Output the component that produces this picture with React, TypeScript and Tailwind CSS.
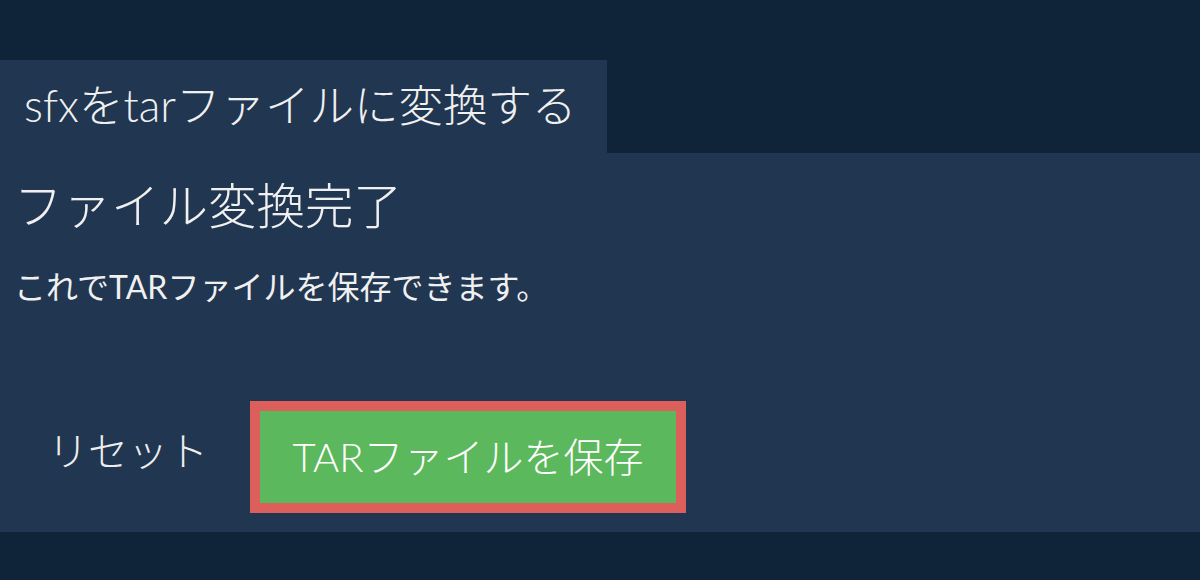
const font = { fontFamily: 'Lato, "Noto Sans CJK JP", sans-serif' }

export default function App() {
  return (
    <div className="flex h-[580px] w-[1200px] flex-col bg-[#0f2339] font-light text-[#f0f0f0]" style={font}>
      <div className="h-[60px]" />
      <div className="flex">
        <div className="flex h-[93px] w-[607px] items-center bg-[#213650] px-[24px] pb-[2px] text-[44.5px] leading-none">
          sfxをtarファイルに変換する
        </div>
      </div>
      <div className="flex h-[379px] flex-col bg-[#213650] px-[14px]">
        <h1 className="mt-[24px] text-[48.5px] font-light leading-[56px]">ファイル変換完了</h1>
        <p className="mt-[34px] text-[32px] font-normal leading-[40px]">これでTARファイルを保存できます。</p>
        <div className="mt-[94px] flex items-center">
          <button className="pb-[12px] pl-[34px] pr-[42px] text-[40px] font-light leading-none text-[#eeeeee]">リセット</button>
          <button className="flex h-[112px] w-[436px] items-center justify-center border-[10px] border-[#dd5f5b] bg-[#5cb85c] text-[40px] font-light leading-none text-white">
            TARファイルを保存
          </button>
        </div>
      </div>
    </div>
  )
}
